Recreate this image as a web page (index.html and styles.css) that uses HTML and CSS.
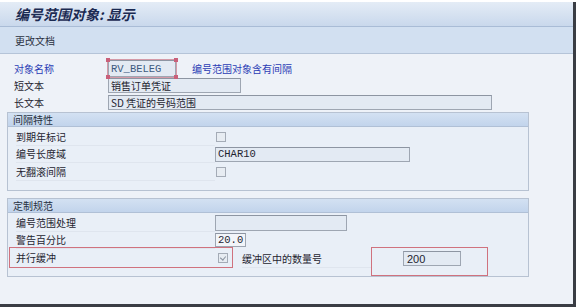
FILE: index.html
```html
<!DOCTYPE html>
<html lang="zh">
<head>
<meta charset="UTF-8" />
<title>编号范围对象: 显示</title>
<link rel="stylesheet" href="styles.css">
</head>
<body>

<div class="window">
  <div class="titlebar">编号范围对象: 显示</div>
  <div class="toolbar">更改文档</div>

  <div class="content">
    <div class="head-rows">
      <div class="row">
        <span class="label key">对象名称</span>
        <span class="selected">
          <span class="field mono w-obj">RV_BELEG</span>
          <i class="handle tl"></i><i class="handle tr"></i>
          <i class="handle bl"></i><i class="handle br"></i>
        </span>
        <span class="note">编号范围对象含有间隔</span>
      </div>
      <div class="row">
        <span class="label">短文本</span>
        <span class="field w-short">销售订单凭证</span>
      </div>
      <div class="row">
        <span class="label">长文本</span>
        <span class="field w-long">SD 凭证的号码范围</span>
      </div>
    </div>

    <div class="group g-interval">
      <div class="group-head">间隔特性</div>
      <div class="group-body">
        <div class="row">
          <span class="label line">到期年标记</span>
          <span class="check"></span>
        </div>
        <div class="row">
          <span class="label line">编号长度域</span>
          <span class="field mono w-char">CHAR10</span>
        </div>
        <div class="row">
          <span class="label line">无翻滚间隔</span>
          <span class="check"></span>
        </div>
      </div>
    </div>

    <div class="group g-custom">
      <div class="group-head">定制规范</div>
      <div class="group-body">
        <div class="row">
          <span class="label line">编号范围处理</span>
          <span class="field w-proc"></span>
        </div>
        <div class="row">
          <span class="label line">警告百分比</span>
          <span class="field mono w-pct">20.0</span>
        </div>
        <div class="row buffer-row">
          <span class="mark mark-left">
            <span class="label">并行缓冲</span>
            <span class="check checked"></span>
          </span>
          <span class="label sub">缓冲区中的数量号</span>
          <span class="mark mark-right">
            <span class="field w-num">200</span>
          </span>
        </div>
      </div>
    </div>
  </div>
</div>

</body>
</html>
```

FILE: styles.css
```css
* {
  box-sizing: border-box;
}
body {
  margin: 0;
  background: #fff;
  font-family: "Noto Sans CJK SC", "Noto Sans", sans-serif;
  font-size: 10px;
  color: #1e2430;
}
.window {
  width: 576px;
  height: 305px;
  margin-top: 2px;
  background: #eef2f8;
  border-right: 3px solid #3a3d44;
  border-bottom: 3px solid #3a3d44;
  display: flex;
  flex-direction: column;
  overflow: hidden;
}
.titlebar {
  height: 25px;
  padding-left: 15px;
  display: flex;
  align-items: center;
  background: linear-gradient(#e4ecf6, #c9d8ec);
  border-bottom: 1px solid #a9bcd6;
  font-size: 14px;
  font-weight: 700;
  font-style: italic;
  color: #1b2a52;
}
.toolbar {
  height: 27px;
  padding-left: 15px;
  display: flex;
  align-items: center;
  background: #d2e0f1;
  border-bottom: 1px solid #b5c4d8;
  color: #2a3040;
}
.content {
  padding: 6px 0 0 7px;
}
.row {
  display: flex;
  align-items: center;
}
.head-rows {
  padding-left: 7px;
}
.head-rows .row {
  height: 17px;
}
.head-rows .label {
  width: 94px;
}
.label {
  white-space: nowrap;
}
.key {
  color: #2b3cb5;
}
.note {
  margin-left: 16px;
  color: #2b3cb5;
}

/* input fields */
.field {
  height: 15px;
  display: flex;
  align-items: center;
  padding-left: 2px;
  background: #e3eaf3;
  border: 1px solid #9ea6b2;
  border-top-color: #8d95a2;
  color: #1e2430;
  white-space: nowrap;
}
.mono {
  font-family: "Liberation Mono", "DejaVu Sans Mono", monospace;
  font-size: 10.5px;
}
.w-obj { width: 68px; height: 17px; color: #3d5a80; }
.w-short { width: 133px; }
.w-long { width: 384px; }
.w-char { width: 195px; }
.w-proc { width: 132px; height: 16px; }
.w-pct { width: 31px; height: 14px; background: #f2f5f9; }
.w-num { width: 58px; font-family: "Liberation Sans", sans-serif; font-size: 11px; padding-left: 3px; }

.selected {
  position: relative;
  display: inline-flex;
  outline: 1px solid #d49aa8;
}
.handle {
  position: absolute;
  width: 4px;
  height: 4px;
  background: #c9607a;
}
.handle.tl { left: -2px; top: -2px; }
.handle.tr { right: -2px; top: -2px; }
.handle.bl { left: -2px; bottom: -2px; }
.handle.br { right: -2px; bottom: -2px; }

/* group boxes */
.group {
  width: 522px;
  border: 1px solid #b7c2d2;
  background: #e9eff7;
}
.g-interval {
  margin-top: 1px;
}
.g-custom {
  margin-top: 7px;
}
.group-head {
  height: 14px;
  padding-left: 5px;
  display: flex;
  align-items: center;
  background: linear-gradient(#d3e1f2, #c2d4ec);
  border-bottom: 1px solid #b0c0d6;
  color: #263040;
}
.group-body {
  padding: 1px 0 0 8px;
}
.g-interval .group-body {
  height: 63px;
}
.group-body .row {
  height: 17.5px;
}
.group-body .label.line {
  width: 199px;
  align-self: stretch;
  display: flex;
  align-items: center;
  border-bottom: 1px solid #dfe5ee;
}
.check {
  width: 10px;
  height: 10px;
  border: 1px solid #a4abb6;
  background: #e7ecf2;
  margin-left: 1px;
}
.check.checked {
  position: relative;
}
.check.checked::after {
  content: "";
  position: absolute;
  left: 2px;
  top: 1px;
  width: 3px;
  height: 4px;
  border-right: 1px solid #8a93a0;
  border-bottom: 1px solid #8a93a0;
  transform: rotate(40deg);
}

/* annotated buffer row */
.buffer-row.row {
  height: 29px;
  align-items: flex-start;
  margin-left: -7px;
  margin-top: -2px;
}
.mark {
  display: flex;
  align-items: center;
  border: 1px solid #d0727e;
}
.mark-left {
  width: 224px;
  height: 21px;
  padding-left: 6px;
}
.mark-left .label {
  width: 201px;
}
.sub {
  margin-left: 9px;
  margin-top: 4px;
  width: 129px;
  border-bottom: 1px solid #dfe5ee;
  padding-bottom: 1px;
}
.mark-right {
  width: 117px;
  height: 29px;
  padding: 3px 0 0 31px;
  align-items: flex-start;
}
```
